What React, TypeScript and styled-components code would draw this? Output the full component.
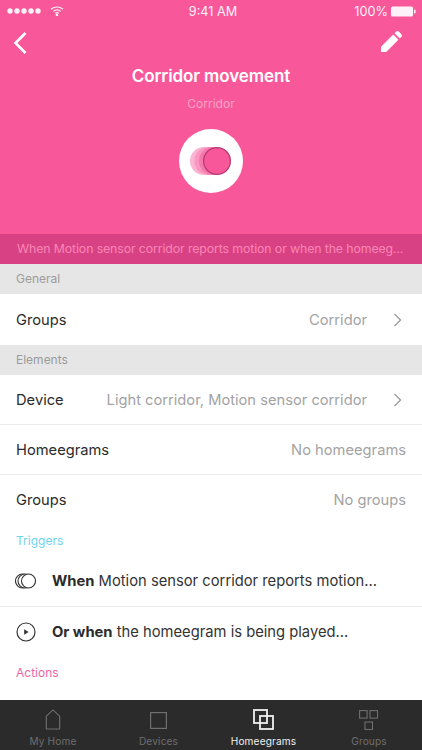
import React from "react";
import styled, { createGlobalStyle } from "styled-components";

const Global = createGlobalStyle`
  html, body { margin: 0; padding: 0; background: #fff; }
  body { font-family: Inter, "Liberation Sans", sans-serif; }
`;

const Screen = styled.div`
  width: 422px; height: 750px; display: flex; flex-direction: column; overflow: hidden; background: #fff;
`;
const Hero = styled.header`
  height: 234px; flex: none; background: #f8589a; color: #fff; display: flex; flex-direction: column; align-items: center;
`;
const StatusBar = styled.div`
  width: 100%; height: 22px; box-sizing: border-box; padding: 0 6px 0 7px; display: grid; grid-template-columns: 1fr auto 1fr; align-items: center;
  font-size: 12.7px; font-weight: 400; color: #fff; opacity: .92;
`;
const StatusLeft = styled.div`display: flex; align-items: center; gap: 8px;`;
const StatusTime = styled.span`margin-left: 3px;`;
const StatusRight = styled.div`display: flex; align-items: center; justify-content: flex-end; gap: 3px;`;
const NavBar = styled.div`
  width: 100%; box-sizing: border-box; padding: 9px 20px 0 12px; display: flex; justify-content: space-between; align-items: flex-start; height: 34px;
`;
const Title = styled.h1`
  margin: 10px 0 0; font-size: 17px; line-height: 20px; font-weight: 600; letter-spacing: -0.1px;
`;
const Subtitle = styled.div`
  margin-top: 10px; font-size: 12px; line-height: 15px; color: #fba3c8;
`;
const Badge = styled.div`
  margin-top: 18px; width: 64px; height: 64px; border-radius: 50%; background: #fff; display: flex; align-items: center; justify-content: center;
`;
const Banner = styled.div`
  height: 30px; flex: none; background: #d84284; color: #fb85b7; font-size: 12.3px; line-height: 30px; padding-left: 17px; letter-spacing: -0.1px; white-space: nowrap;
`;
const SectionHead = styled.div`
  height: 30px; flex: none; background: #e6e6e6; color: #9b9b9b; font-size: 12px; line-height: 30px; padding-left: 16px;
`;
const Row = styled.div<{ $h?: number; $line?: boolean }>`
  height: ${p => p.$h ?? 50}px; flex: none; box-sizing: border-box; display: flex; align-items: center; padding: 0 16px; background: #fff;
  border-bottom: ${p => (p.$line ? "1px solid #ececec" : "none")};
`;
const RowLabel = styled.span`font-size: 14.7px; color: #2b2b2b; flex: none;`;
const RowValue = styled.span`
  margin-left: auto; font-size: 14.7px; color: #a3a3a3; white-space: nowrap;
`;
const Chevron = styled.svg`margin-left: 26px; margin-right: 4px; flex: none;`;
const ColorLabel = styled.div<{ $color: string; $h: number }>`
  height: ${p => p.$h}px; flex: none; box-sizing: border-box; padding: 8px 16px 0; font-size: 12px; line-height: 15px; color: ${p => p.$color}; background: #fff;
`;
const TriggerRow = styled.div<{ $line?: boolean; $h: number }>`
  height: ${p => p.$h}px; flex: none; box-sizing: border-box; display: flex; align-items: center; gap: 16px; padding: 0 16px 0 15px;
  border-bottom: ${p => (p.$line ? "1px solid #ececec" : "none")};
`;
const TriggerText = styled.div`
  font-size: 14.75px; color: #333; white-space: nowrap; b { font-weight: 700; color: #2b2b2b; }
`;
const IconSlot = styled.div`width: 21px; display: flex; justify-content: center; flex: none;`;
const Spacer = styled.div`flex: 1;`;
const TabBar = styled.nav`
  height: 50px; flex: none; background: #2b2b2b; display: grid; grid-template-columns: 106px 105px 105px 106px;
`;
const Tab = styled.div<{ $active?: boolean }>`
  display: flex; flex-direction: column; align-items: center; color: ${p => (p.$active ? "#f0f0f0" : "#6e6e6e")};
  font-size: 10.1px; letter-spacing: .15px;
`;
const TabIcon = styled.div`height: 30px; display: flex; align-items: flex-end;`;
const TabLabel = styled.span`line-height: 13px; margin-top: 5px;`;

const chev = (
  <Chevron width="9" height="14" viewBox="0 0 9 14" fill="none" stroke="#9e9e9e" strokeWidth="1.4">
    <path d="M1.5 1 L7.5 7 L1.5 13" />
  </Chevron>
);

export default function App() {
  return (
    <Screen>
      <Global />
      <Hero>
        <StatusBar>
          <StatusLeft>
            <svg width="35" height="6" viewBox="0 0 35 6" fill="#fff">
              <circle cx="3" cy="3" r="2.7" /><circle cx="10" cy="3" r="2.7" /><circle cx="17" cy="3" r="2.7" /><circle cx="24" cy="3" r="2.7" /><circle cx="31" cy="3" r="2.7" />
            </svg>
            <svg width="14" height="10" viewBox="0 0 14 10" fill="none" stroke="#fff" strokeWidth="1.2">
              <path d="M1 3.3 C4.5 0.2 9.5 0.2 13 3.3" />
              <path d="M3.2 5.4 C5.4 3.6 8.6 3.6 10.8 5.4" />
              <path d="M5.2 7.3 C6.3 6.5 7.7 6.5 8.8 7.3" />
              <circle cx="7" cy="9" r=".7" fill="#fff" />
            </svg>
          </StatusLeft>
          <StatusTime>9:41 AM</StatusTime>
          <StatusRight>
            <span>100%</span>
            <svg width="25" height="11" viewBox="0 0 25 11">
              <rect x="0" y="0.5" width="22" height="10" rx="1.5" fill="#fff" />
              <rect x="23" y="3.5" width="1.5" height="4" rx=".7" fill="#fff" />
            </svg>
          </StatusRight>
        </StatusBar>
        <NavBar>
          <svg width="16" height="24" viewBox="0 0 16 24" fill="none" stroke="#fff" strokeWidth="2.6">
            <path d="M13.5 2 L3.5 12 L13.5 22" />
          </svg>
          <svg width="21" height="21" viewBox="0 0 21 21" fill="#fff">
            <path d="M0 21 V15.8 L12.2 3.6 L17.4 8.8 L5.2 21 Z" />
            <path d="M13.6 2.2 L15.2 0.6 C16 -.2 17 -.2 17.8 .6 L20.4 3.2 C21.2 4 21.2 5 20.4 5.8 L18.8 7.4 Z" />
          </svg>
        </NavBar>
        <Title>Corridor movement</Title>
        <Subtitle>Corridor</Subtitle>
        <Badge>
          <svg width="42" height="30" viewBox="0 0 42 30">
            <circle cx="14" cy="15" r="14" fill="#fbb4d2" />
            <circle cx="18.5" cy="15" r="14" fill="#fa97c0" />
            <circle cx="23" cy="15" r="14" fill="#f677ad" />
            <circle cx="27" cy="15" r="13.4" fill="#f8589a" stroke="#b93a72" strokeWidth="1.3" />
          </svg>
        </Badge>
      </Hero>
      <Banner>When Motion sensor corridor reports motion or when the homeeg...</Banner>
      <SectionHead>General</SectionHead>
      <Row $h={51}>
        <RowLabel>Groups</RowLabel>
        <RowValue>Corridor</RowValue>
        {chev}
      </Row>
      <SectionHead>Elements</SectionHead>
      <Row $line>
        <RowLabel>Device</RowLabel>
        <RowValue>Light corridor, Motion sensor corridor</RowValue>
        {chev}
      </Row>
      <Row $line>
        <RowLabel>Homeegrams</RowLabel>
        <RowValue>No homeegrams</RowValue>
      </Row>
      <Row>
        <RowLabel>Groups</RowLabel>
        <RowValue>No groups</RowValue>
      </Row>
      <ColorLabel $color="#6fd3ee" $h={30}>Triggers</ColorLabel>
      <TriggerRow $line $h={52}>
        <IconSlot>
          <svg width="21" height="16" viewBox="0 0 21 16" fill="#fff" stroke="#333" strokeWidth="1.1">
            <circle cx="7.5" cy="8" r="7" />
            <circle cx="10" cy="8" r="7" />
            <circle cx="13.5" cy="8" r="7" />
          </svg>
        </IconSlot>
        <TriggerText><b>When</b> Motion sensor corridor reports motion...</TriggerText>
      </TriggerRow>
      <TriggerRow $h={50}>
        <IconSlot>
          <svg width="20" height="20" viewBox="0 0 20 20">
            <circle cx="10" cy="10" r="9" fill="none" stroke="#333" strokeWidth="1.2" />
            <path d="M8.2 7.3 L12.6 10 L8.2 12.7 Z" fill="#333" />
          </svg>
        </IconSlot>
        <TriggerText><b>Or when</b> the homeegram is being played...</TriggerText>
      </TriggerRow>
      <ColorLabel $color="#ee66a8" $h={33}>Actions</ColorLabel>
      <Spacer />
      <TabBar>
        <Tab>
          <TabIcon>
            <svg width="16" height="21" viewBox="0 0 16 22" fill="none" stroke="#6e6e6e" strokeWidth="1.2">
              <path d="M1 20.5 V7.5 L8 1 L15 7.5 V20.5 Q15 21 14.5 21 H1.5 Q1 21 1 20.5 Z" />
            </svg>
          </TabIcon>
          <TabLabel>My Home</TabLabel>
        </Tab>
        <Tab>
          <TabIcon>
            <svg width="17" height="18" viewBox="0 0 17 18" fill="none" stroke="#6e6e6e" strokeWidth="1.2">
              <rect x=".6" y=".6" width="15.8" height="15.8" />
            </svg>
          </TabIcon>
          <TabLabel>Devices</TabLabel>
        </Tab>
        <Tab $active>
          <TabIcon>
            <svg width="21" height="21" viewBox="0 0 21 21" fill="none" stroke="#f0f0f0" strokeWidth="1.8">
              <rect x="1" y="1" width="13" height="13" />
              <rect x="7" y="7" width="13" height="13" />
            </svg>
          </TabIcon>
          <TabLabel>Homeegrams</TabLabel>
        </Tab>
        <Tab>
          <TabIcon>
            <svg width="20" height="20" viewBox="0 0 20 20" fill="none" stroke="#6e6e6e" strokeWidth="1.1">
              <rect x=".6" y=".6" width="7.5" height="7.5" />
              <rect x="11" y=".6" width="7.5" height="7.5" />
              <rect x="6" y="12" width="7.5" height="7.5" />
            </svg>
          </TabIcon>
          <TabLabel>Groups</TabLabel>
        </Tab>
      </TabBar>
    </Screen>
  );
}
